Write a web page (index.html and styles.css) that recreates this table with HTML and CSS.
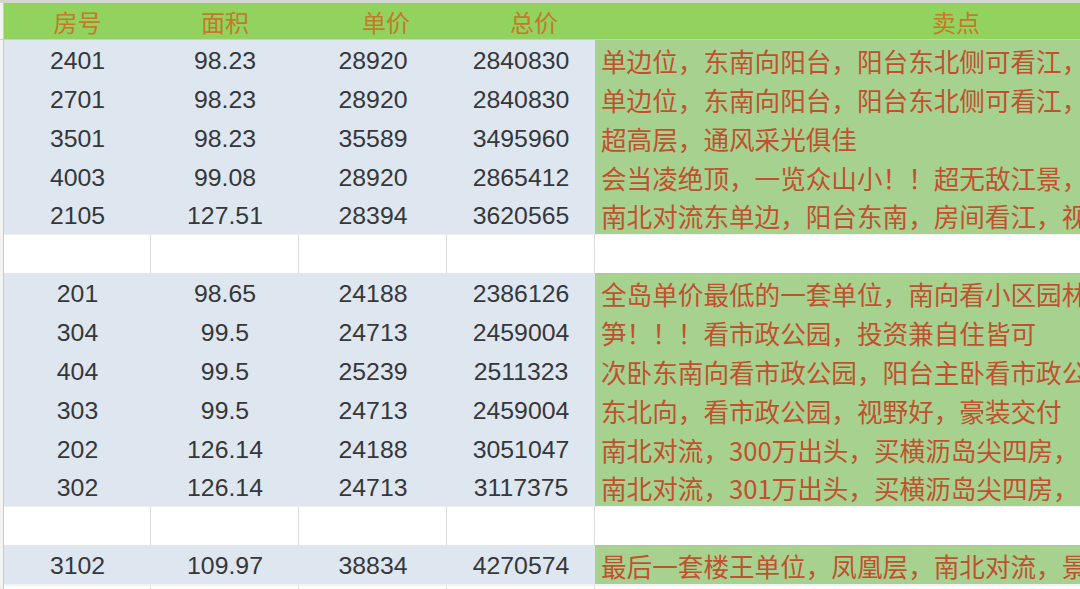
FILE: index.html
```html
<!DOCTYPE html>
<html lang="zh-CN">
<head>
<meta charset="utf-8">
<title>房源表</title>
<link rel="stylesheet" href="styles.css">
</head>
<body>
<div class="sheet">
  <div class="row head">
    <div class="gutter"></div>
    <div class="cell">房号</div>
    <div class="cell">面积</div>
    <div class="cell shift">单价</div>
    <div class="cell shift">总价</div>
    <div class="cell sell">卖点</div>
  </div>

  <div class="row data"><div class="gutter"></div><div class="cell">2401</div><div class="cell">98.23</div><div class="cell">28920</div><div class="cell">2840830</div><div class="cell note">单边位，东南向阳台，阳台东北侧可看江，</div></div>
  <div class="row data"><div class="gutter"></div><div class="cell">2701</div><div class="cell">98.23</div><div class="cell">28920</div><div class="cell">2840830</div><div class="cell note">单边位，东南向阳台，阳台东北侧可看江，</div></div>
  <div class="row data"><div class="gutter"></div><div class="cell">3501</div><div class="cell">98.23</div><div class="cell">35589</div><div class="cell">3495960</div><div class="cell note">超高层，通风采光俱佳</div></div>
  <div class="row data"><div class="gutter"></div><div class="cell">4003</div><div class="cell">99.08</div><div class="cell">28920</div><div class="cell">2865412</div><div class="cell note">会当凌绝顶，一览众山小！！超无敌江景，</div></div>
  <div class="row data"><div class="gutter"></div><div class="cell">2105</div><div class="cell">127.51</div><div class="cell">28394</div><div class="cell">3620565</div><div class="cell note">南北对流东单边，阳台东南，房间看江，视</div></div>

  <div class="row blank"><div class="gutter"></div><div class="cell"></div><div class="cell"></div><div class="cell"></div><div class="cell"></div><div class="cell last"></div></div>

  <div class="row data"><div class="gutter"></div><div class="cell">201</div><div class="cell">98.65</div><div class="cell">24188</div><div class="cell">2386126</div><div class="cell note">全岛单价最低的一套单位，南向看小区园林</div></div>
  <div class="row data"><div class="gutter"></div><div class="cell">304</div><div class="cell">99.5</div><div class="cell">24713</div><div class="cell">2459004</div><div class="cell note">笋！！！看市政公园，投资兼自住皆可</div></div>
  <div class="row data"><div class="gutter"></div><div class="cell">404</div><div class="cell">99.5</div><div class="cell">25239</div><div class="cell">2511323</div><div class="cell note">次卧东南向看市政公园，阳台主卧看市政公</div></div>
  <div class="row data"><div class="gutter"></div><div class="cell">303</div><div class="cell">99.5</div><div class="cell">24713</div><div class="cell">2459004</div><div class="cell note">东北向，看市政公园，视野好，豪装交付</div></div>
  <div class="row data"><div class="gutter"></div><div class="cell">202</div><div class="cell">126.14</div><div class="cell">24188</div><div class="cell">3051047</div><div class="cell note">南北对流，300万出头，买横沥岛尖四房，</div></div>
  <div class="row data"><div class="gutter"></div><div class="cell">302</div><div class="cell">126.14</div><div class="cell">24713</div><div class="cell">3117375</div><div class="cell note">南北对流，301万出头，买横沥岛尖四房，</div></div>

  <div class="row blank"><div class="gutter"></div><div class="cell"></div><div class="cell"></div><div class="cell"></div><div class="cell"></div><div class="cell last"></div></div>

  <div class="row data"><div class="gutter"></div><div class="cell">3102</div><div class="cell">109.97</div><div class="cell">38834</div><div class="cell">4270574</div><div class="cell note">最后一套楼王单位，凤凰层，南北对流，景</div></div>

  <div class="row blank tail"><div class="gutter"></div><div class="cell"></div><div class="cell"></div><div class="cell"></div><div class="cell"></div><div class="cell last"></div></div>
</div>
</body>
</html>
```

FILE: styles.css
```css
html, body {
  margin: 0;
  padding: 0;
  background: #ffffff;
  overflow: hidden;
}

.sheet {
  width: 1080px;
  height: 589px;
  overflow: hidden;
  border-top: 3px solid #d4d6d2;
  box-sizing: border-box;
  font-family: "Liberation Sans", "Noto Sans CJK SC", sans-serif;
}

.row {
  display: grid;
  grid-template-columns: 4px 147px 148px 148px 148px 1fr;
  height: 38.86px;
}

.gutter {
  background: #f3f4f2;
  border-right: 1px solid #c9cbc8;
}

.cell {
  display: flex;
  align-items: center;
  justify-content: center;
  white-space: nowrap;
  overflow: hidden;
  box-sizing: border-box;
}

.head {
  height: 36px;
  background: #92d25e;
  border-bottom: 1px solid #bcdda4;
}

.head .cell {
  color: #c47a28;
  font-family: "Noto Sans CJK SC", "Liberation Sans", sans-serif;
  font-size: 24px;
  padding-top: 1px;
}

.head .shift {
  padding-left: 26px;
}

.head .sell {
  justify-content: flex-start;
  padding-left: 337px;
}

.data .cell {
  background: #dee6ef;
  color: #35373b;
  font-size: 24.8px;
  padding-top: 3px;
}

.data .note {
  background: #a7d18e;
  color: #c0512f;
  font-family: "Noto Sans CJK SC", sans-serif;
  font-size: 25.6px;
  justify-content: flex-start;
  padding-left: 6px;
  padding-top: 2px;
}

.blank .cell {
  background: #ffffff;
  border-right: 1px solid #dcdedb;
  border-top: 1px solid #eef0ee;
}

.blank .cell.last {
  border-right: none;
}

.tail .cell {
  border-top: 2px solid #f2f3f1;
}
```
